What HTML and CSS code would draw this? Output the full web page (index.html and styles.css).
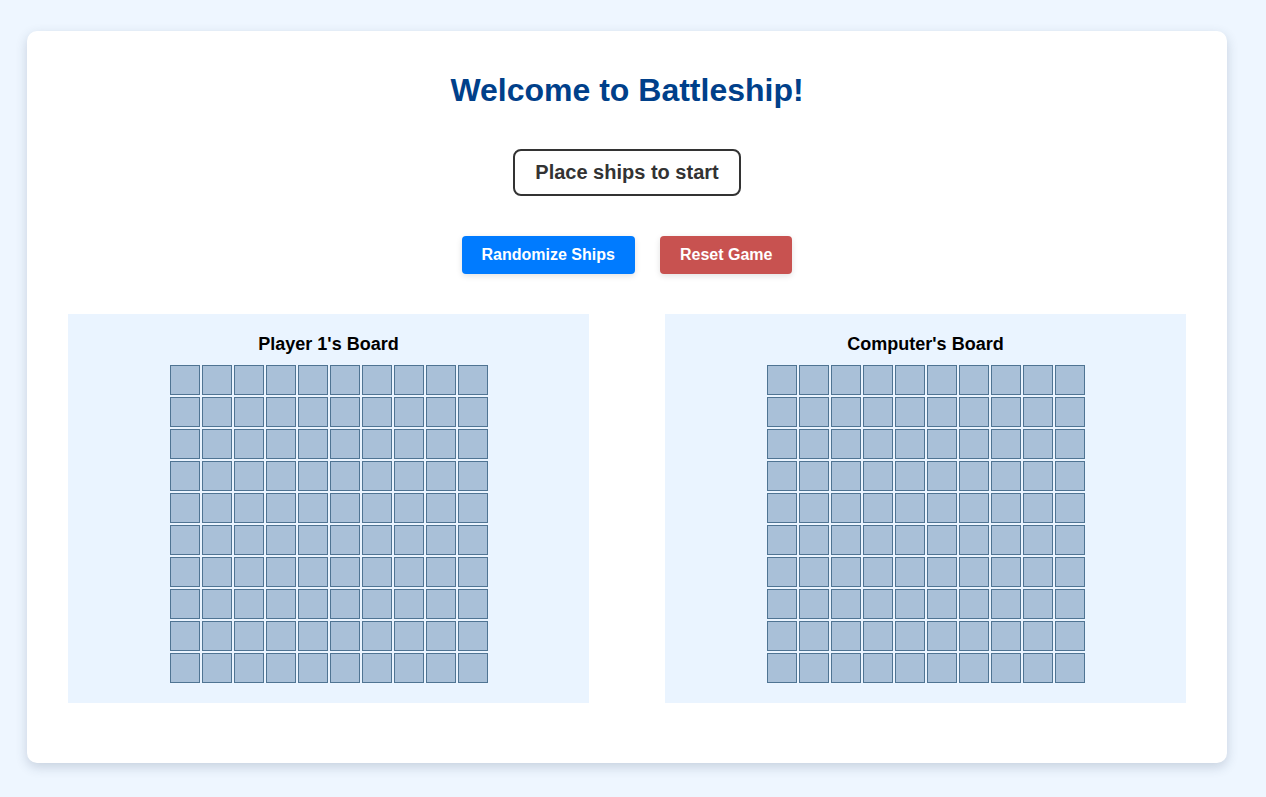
FILE: index.html
```html
<!DOCTYPE html>
<html lang="en">
<head>
<meta charset="utf-8">
<title>Battleship</title>
<link rel="stylesheet" href="styles.css">
</head>
<body>
<main class="card">
  <h1 class="title">Welcome to Battleship!</h1>
  <div class="status-row"><div class="status">Place ships to start</div></div>
  <div class="controls">
    <button class="btn btn-blue">Randomize Ships</button>
    <button class="btn btn-red">Reset Game</button>
  </div>
  <div class="boards">
    <section class="board">
      <h3 class="board-title">Player 1's Board</h3>
      <div class="grid" id="g1"></div>
    </section>
    <section class="board">
      <h3 class="board-title">Computer's Board</h3>
      <div class="grid" id="g2"></div>
    </section>
  </div>
</main>
<script src="script.js"></script>
</body>
</html>
```
FILE: styles.css
```css
* { box-sizing: border-box; }
html, body { margin: 0; }
body {
  background: #eef6ff;
  font-family: "Liberation Sans", Arial, sans-serif;
  padding: 31px 0 34px 27px;
}
.card {
  width: 1200px;
  height: 732px;
  background: #fff;
  border-radius: 10px;
  box-shadow: 0 4px 12px rgba(40, 60, 90, 0.2);
  padding: 41px 41px 40px;
}
.title {
  margin: 0;
  text-align: center;
  font-size: 32px;
  line-height: 37px;
  color: #00408a;
  font-weight: bold;
}
.status-row {
  display: flex;
  justify-content: center;
  margin-top: 40px;
}
.status {
  border: 2px solid #333;
  border-radius: 8px;
  padding: 10px 20px;
  font-size: 20px;
  line-height: 23px;
  font-weight: bold;
  color: #333;
}
.controls {
  display: flex;
  justify-content: center;
  gap: 25px;
  margin-top: 40px;
}
.btn {
  font-family: "Liberation Sans", Arial, sans-serif;
  font-size: 16px;
  font-weight: bold;
  line-height: 18px;
  color: #fff;
  border: none;
  border-radius: 4px;
  padding: 10px 20px;
  box-shadow: 0 2px 6px rgba(0, 0, 0, 0.12);
}
.btn-blue { background: #007bff; }
.btn-red { background: #c85250; }
.boards {
  display: flex;
  gap: 76px;
  margin-top: 40px;
}
.board {
  width: 521px;
  background: #eaf4ff;
  padding: 20px 0;
  display: flex;
  flex-direction: column;
  align-items: center;
}
.board-title {
  margin: 0 0 10px;
  font-size: 18px;
  line-height: 21px;
  font-weight: bold;
  color: #000;
}
.grid {
  display: grid;
  grid-template-columns: repeat(10, 30px);
  grid-auto-rows: 30px;
  gap: 2px;
}
.cell {
  background: #a9c0d8;
  border: 1px solid #4f7493;
}
```
FILE: script.js
```js
['g1', 'g2'].forEach(function (id) {
  var g = document.getElementById(id);
  for (var i = 0; i < 100; i++) {
    var c = document.createElement('div');
    c.className = 'cell';
    g.appendChild(c);
  }
});
```
